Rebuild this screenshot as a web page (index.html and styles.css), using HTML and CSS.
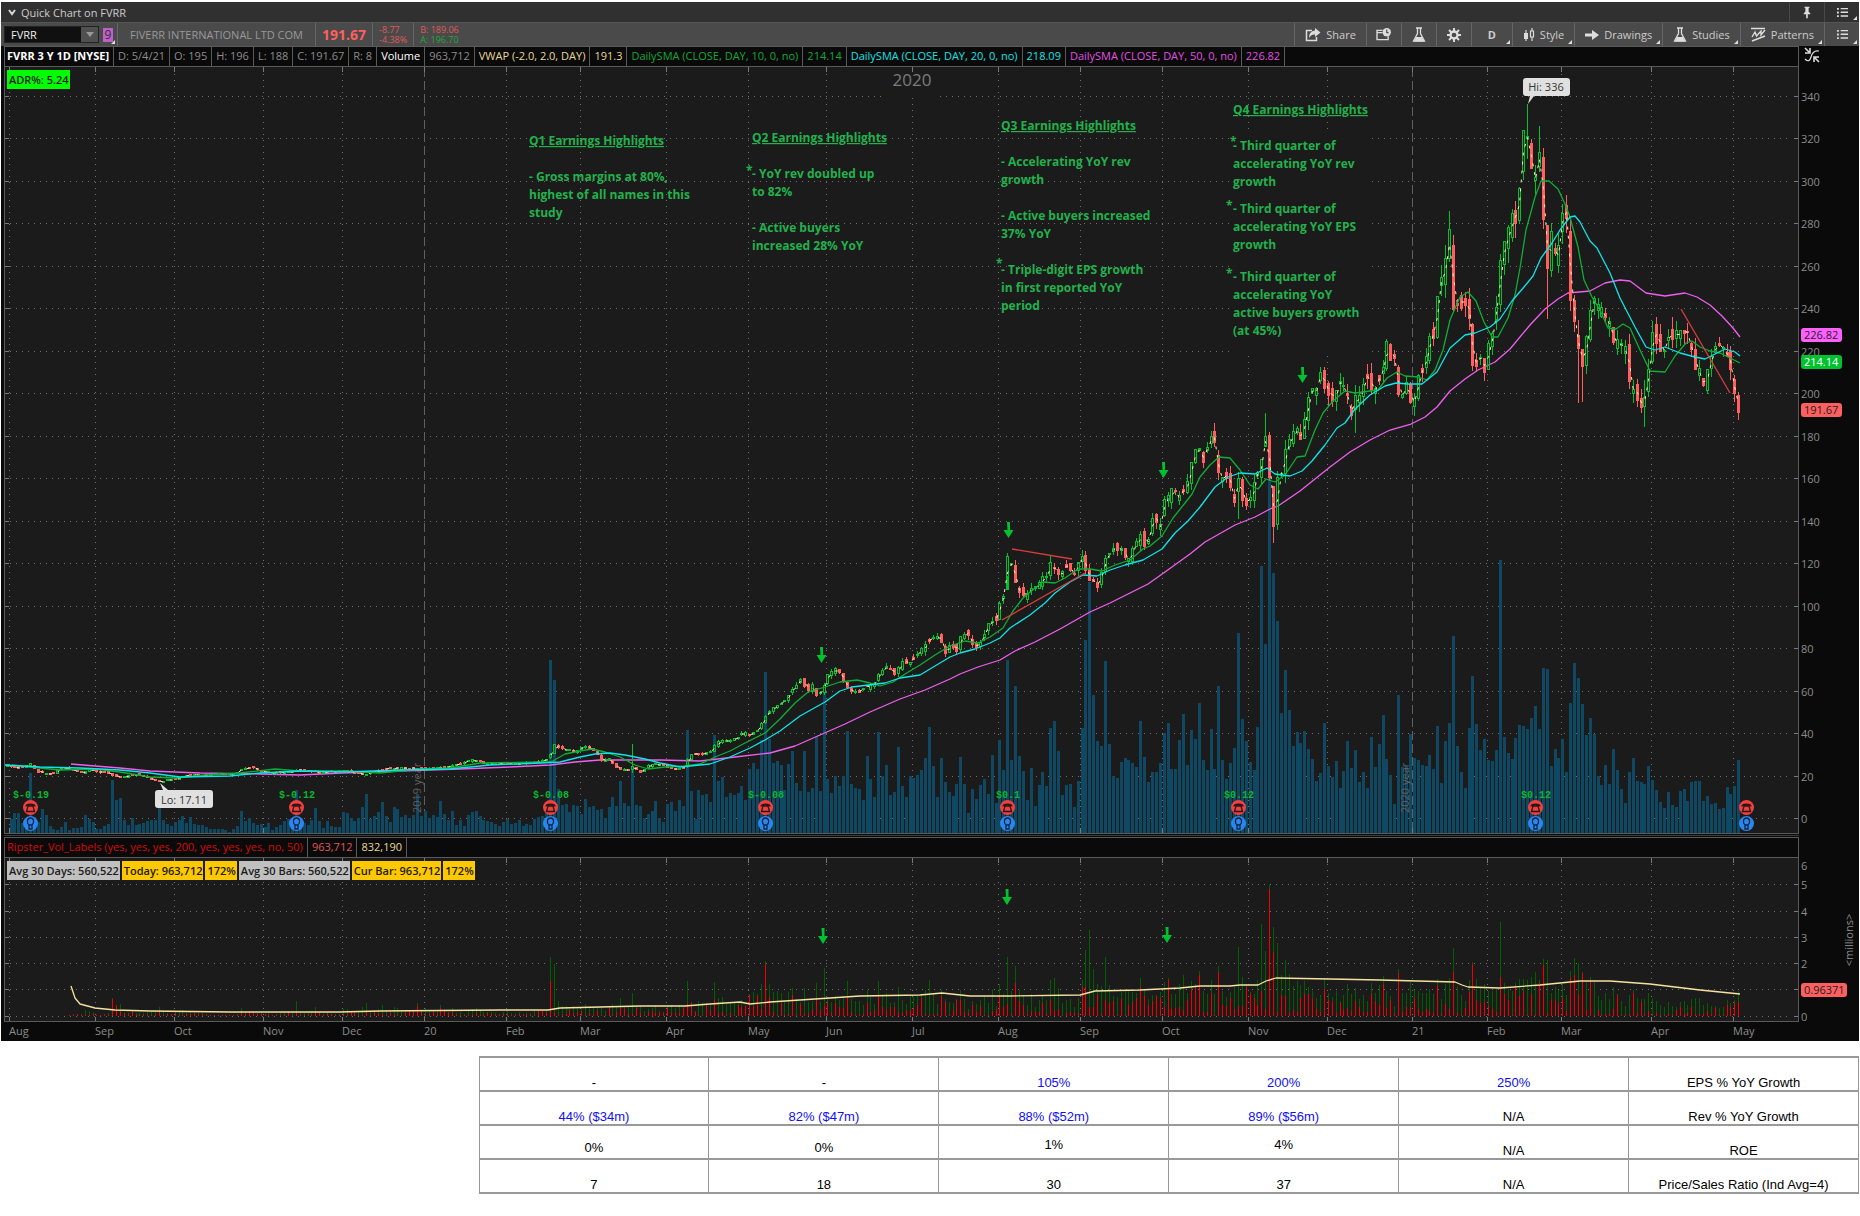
FILE: index.html
```html
<!DOCTYPE html>
<html lang="en">
<head>
    <meta charset="UTF-8">
    <meta name="viewport" content="width=device-width, initial-scale=1.0">
    <title>Quick Chart on FVRR</title>
    <link rel="stylesheet" href="styles.css">
</head>
<body>
    <main class="platform">
        <header class="titlebar">
            <svg class="chevron" viewBox="0 0 8 8"><path d="M1 2l3 4 3-4" fill="none" stroke="#d8d8d8" stroke-width="2"/></svg>
            <h1>Quick Chart on FVRR</h1>
            <button class="tool icon-only pin" aria-label="Pin">
                <svg viewBox="0 0 12 16" width="10" height="13"><path d="M3 1h6v1.5H8V7l2 2v1H7v5H5v-5H2V9l2-2V2.500H3z" fill="#ddd"/></svg>
            </button>
            <button class="tool icon-only menu has-corner" aria-label="Window menu">
                <svg viewBox="0 0 12 12" width="11" height="11"><path d="M0 1h2v2H0zM4 1h8v1.500H4zM0 5h2v2H0zM4 5h8v1.500H4zM0 9h2v2H0zM4 9h8v1.500H4z" fill="#ddd"/></svg>
            </button>
        </header>

        <div class="toolbar">
            <div class="symbol">
                <input type="text" value="FVRR" aria-label="Symbol">
                <button aria-label="Symbol list"><svg viewBox="0 0 8 5" width="8" height="5"><path d="M0 0h8L4 5z" fill="#999"/></svg></button>
            </div>
            <button class="link-badge has-corner" aria-label="Link group"><span>9</span></button>
            <div class="quote company">FIVERR INTERNATIONAL LTD COM</div>
            <div class="quote last">191.67</div>
            <div class="quote pair"><span class="down">-8.77</span><span class="down">-4.38%</span></div>
            <div class="quote pair"><span class="down">B: 189.06</span><span class="up">A: 196.70</span></div>
            <div class="tools">
                <button class="tool share">
                    <svg viewBox="0 0 16 14" width="16" height="14"><path d="M7 2.500H1.500v10h10V9" fill="none" stroke="#ddd" stroke-width="1.500"/><path d="M10 0l5.500 4.500L10 9V6.500C7 6.300 5.500 7.500 4 10c0-4.500 2-7 6-7.500z" fill="#ddd"/></svg>
                    Share
                </button>
                <button class="tool icon-only" aria-label="Report">
                    <svg viewBox="0 0 16 14" width="15" height="13"><path d="M7 2.500H1v10h12V9M1 5h6" fill="none" stroke="#ddd" stroke-width="1.500"/><circle cx="11.500" cy="4.500" r="4.500" fill="#ddd"/><path d="M11.500 1.500v3.500h2" fill="none" stroke="#4a4a4a" stroke-width="1.200"/></svg>
                </button>
                <button class="tool icon-only" aria-label="Lab">
                    <svg viewBox="0 0 14 16" width="14" height="16"><path d="M4 1h6M5.500 1v5.500L1.500 14h11L8.500 6.500V1" fill="none" stroke="#ddd" stroke-width="1.300"/><path d="M4 10h6l2 4.500H2z" fill="#ddd"/></svg>
                </button>
                <button class="tool icon-only" aria-label="Settings">
                    <svg viewBox="0 0 16 16" width="14" height="14"><circle cx="8" cy="8" r="4" fill="none" stroke="#ddd" stroke-width="2.600"/><path d="M8 0v4M8 12v4M0 8h4M12 8h4M2.300 2.300l2.800 2.800M10.900 10.900l2.800 2.800M2.300 13.700l2.800-2.800M10.900 5.100l2.800-2.800" stroke="#ddd" stroke-width="2.200"/></svg>
                </button>
                <button class="tool period has-corner">D</button>
                <button class="tool has-corner">
                    <svg viewBox="0 0 12 14" width="12" height="14"><path d="M3 2v11M9 0v3M9 9v4" stroke="#ddd" stroke-width="1.200"/><path d="M1 5h4v6H1z" fill="#ddd"/><path d="M7.500 3h3v6h-3z" fill="none" stroke="#ddd" stroke-width="1.200"/></svg>
                    Style
                </button>
                <button class="tool has-corner">
                    <svg viewBox="0 0 14 12" width="14" height="12"><path d="M0 4.500h7V1l7 5-7 5V7.500H0z" fill="#ddd"/></svg>
                    Drawings
                </button>
                <button class="tool has-corner">
                    <svg viewBox="0 0 14 16" width="14" height="16"><path d="M4 1h6M5.500 1v5.500L1.500 14h11L8.500 6.500V1" fill="none" stroke="#ddd" stroke-width="1.300"/><path d="M4 10h6l2 4.500H2z" fill="#ddd"/></svg>
                    Studies
                </button>
                <button class="tool has-corner">
                    <svg viewBox="0 0 15 15" width="15" height="15"><path d="M0 1.500h14M1 14l13-5" stroke="#ddd" stroke-width="1.600"/><path d="M1 10l3-5 1.500 4L10 4v4l4-5" fill="none" stroke="#ddd" stroke-width="1.400"/></svg>
                    Patterns
                </button>
                <button class="tool icon-only menu has-corner" aria-label="Chart menu">
                    <svg viewBox="0 0 12 12" width="11" height="11"><path d="M0 1h2v2H0zM4 1h8v1.500H4zM0 5h2v2H0zM4 5h8v1.500H4zM0 9h2v2H0zM4 9h8v1.500H4z" fill="#ddd"/></svg>
                </button>
            </div>
        </div>

        <div class="legend-row">
            <div class="legend">
                <span class="name">FVRR 3 Y 1D [NYSE]</span>
                <span>D: 5/4/21</span>
                <span>O: 195</span>
                <span>H: 196</span>
                <span>L: 188</span>
                <span>C: 191.67</span>
                <span>R: 8</span>
                <span class="white">Volume</span>
                <span>963,712</span>
                <span class="vwap">VWAP (-2.0, 2.0, DAY)</span>
                <span class="vwap">191.3</span>
                <span class="sma10">DailySMA (CLOSE, DAY, 10, 0, no)</span>
                <span class="sma10">214.14</span>
                <span class="sma20">DailySMA (CLOSE, DAY, 20, 0, no)</span>
                <span class="sma20">218.09</span>
                <span class="sma50">DailySMA (CLOSE, DAY, 50, 0, no)</span>
                <span class="sma50">226.82</span>
            </div>
            <button class="collapse" aria-label="Collapse axis">
                <svg viewBox="0 0 16 16" width="16" height="16"><path d="M1 1l4 4M6 1v5H1M15 15l-4-4M10 15v-5h5" fill="none" stroke="#ddd" stroke-width="1.600"/><path d="M1 12c3 3 5 2 6-2s3-7 8-6" fill="none" stroke="#ddd" stroke-width="1.200"/></svg>
            </button>
        </div>

        <section class="panel">
            <svg id="priceChart" class="chart" viewBox="1 67 1858 767"></svg>
            <div class="labels"><span class="adr">ADR%: 5.24</span></div>
        </section>

        <div class="divider"></div>

        <div class="legend-row">
            <div class="legend">
                <span class="ripster">Ripster_Vol_Labels (yes, yes, yes, 200, yes, yes, yes, no, 50)</span>
                <span class="down">963,712</span>
                <span class="vwap">832,190</span>
            </div>
        </div>

        <section class="panel">
            <svg id="volumeChart" class="chart" viewBox="1 858 1858 183"></svg>
            <div class="labels">
                <span>Avg 30 Days: 560,522</span>
                <span class="hot">Today: 963,712</span>
                <span class="hot">172%</span>
                <span>Avg 30 Bars: 560,522</span>
                <span class="hot">Cur Bar: 963,712</span>
                <span class="hot">172%</span>
            </div>
        </section>
    </main>

    <table class="growth">
        <tbody>
            <tr><td>-</td><td>-</td><td class="blue">105%</td><td class="blue">200%</td><td class="blue">250%</td><th scope="row">EPS % YoY Growth</th></tr>
            <tr><td class="blue">44% ($34m)</td><td class="blue">82% ($47m)</td><td class="blue">88% ($52m)</td><td class="blue">89% ($56m)</td><td>N/A</td><th scope="row">Rev % YoY Growth</th></tr>
            <tr><td class="mid">0%</td><td class="mid">0%</td><td class="high">1%</td><td class="high">4%</td><td>N/A</td><th scope="row">ROE</th></tr>
            <tr><td>7</td><td>18</td><td>30</td><td>37</td><td>N/A</td><th scope="row">Price/Sales Ratio (Ind Avg=4)</th></tr>
        </tbody>
    </table>

    <script src="chart.js"></script>
</body>
</html>
```

FILE: styles.css
```css
* {
    box-sizing: border-box;
}

body {
    margin: 0;
    padding: 2px 1px 0;
    background: #fff;
    font-family: "Open Sans", "Noto Sans", sans-serif;
    font-size: 11px;
    color: #ccc;
}

button {
    font: inherit;
    color: inherit;
    background: none;
    border: none;
    padding: 0;
    cursor: pointer;
}

.platform {
    background: #0a0a0a;
}

/* title bar */
.titlebar {
    display: flex;
    align-items: center;
    height: 20px;
    padding-left: 7px;
    background: #303030;
}

.titlebar h1 {
    flex: 1;
    margin: 0 0 0 5px;
    font-size: 11px;
    font-weight: 400;
}

.chevron {
    width: 8px;
    height: 8px;
}

/* toolbar */
.toolbar {
    display: flex;
    align-items: stretch;
    height: 24px;
    border-top: 1px solid #555;
    background: #4a4a4a;
}

.symbol {
    display: flex;
    width: 95px;
    margin: 3px 0 3px 3px;
    border: 1px solid #222;
    background: #101010;
}

.symbol input {
    flex: 1;
    min-width: 0;
    padding: 0 6px;
    border: none;
    background: none;
    font: inherit;
    color: #eee;
}

.symbol button {
    display: flex;
    align-items: center;
    justify-content: center;
    width: 17px;
    background: #505050;
}

.link-badge {
    display: flex;
    align-items: center;
    justify-content: center;
    width: 18px;
}

.link-badge span {
    width: 10px;
    background: #c05fc8;
    color: #333;
    font-size: 12px;
    line-height: 14px;
}

.quote {
    display: flex;
    align-items: center;
    padding: 0 6px;
    border-left: 1px solid #666;
}

.company {
    padding: 0 12px;
    color: #999;
}

.last {
    font-size: 14px;
    font-weight: 700;
    color: #ff5f5f;
}

.pair {
    flex-direction: column;
    align-items: flex-start;
    justify-content: center;
    font-size: 9px;
    line-height: 10px;
}

.pair:last-of-type {
    border-right: 1px solid #666;
}

.down {
    color: #e05858;
}

.up {
    color: #1fa83c;
}

.tools {
    display: flex;
    margin-left: auto;
}

.tool {
    display: flex;
    align-items: center;
    justify-content: center;
    gap: 5px;
    padding: 0 10px;
    border-left: 1px solid #666;
    color: #ccc;
}

.icon-only {
    width: 35px;
    padding: 0;
}

.titlebar .tool {
    align-self: stretch;
    border-color: #484848;
}

.period {
    width: 41px;
    font-weight: 700;
}

.has-corner {
    position: relative;
}

.has-corner::after {
    content: "";
    position: absolute;
    right: 2px;
    bottom: 2px;
    border-left: 4px solid transparent;
    border-bottom: 4px solid #ddd;
}

/* study legends */
.legend-row {
    display: flex;
    height: 21px;
    padding-left: 3px;
}

.legend {
    flex: 1;
    display: flex;
    border: 1px solid #5a5a5a;
    overflow: hidden;
    white-space: nowrap;
}

.legend span {
    padding: 0 4px;
    border-right: 1px solid #5a5a5a;
    line-height: 18px;
    color: #8c8c8c;
}

.legend span:first-child {
    padding-left: 2px;
}

.legend .name {
    color: #fff;
    font-weight: 700;
}

.legend .white {
    color: #fff;
}

.legend .vwap {
    color: #e8d896;
}

.legend .sma10 {
    color: #10a838;
}

.legend .sma20 {
    color: #18e0e4;
}

.legend .sma50 {
    color: #e050e0;
}

.legend .ripster {
    color: #d80808;
}

.legend .down {
    color: #e05858;
}

.collapse {
    width: 60px;
    padding-left: 5px;
    text-align: left;
}

.legend-row:not(:has(.collapse)) {
    padding-right: 60px;
}

.divider {
    height: 3px;
    margin: 0 60px 0 3px;
    border-top: 1px solid #0a0a0a;
    border-bottom: 1px solid #0a0a0a;
    background: #3c3c3c;
}

/* chart panels */
.panel {
    position: relative;
}

.chart {
    display: block;
    width: 100%;
    height: auto;
}

.labels {
    position: absolute;
    top: 3px;
    left: 6px;
    display: flex;
    gap: 2px;
}

.labels span {
    padding: 0 1px 0 2px;
    background: #c0c0c0;
    color: #1b1b1b;
    font-weight: 600;
    line-height: 19px;
}

.labels .hot {
    background: #ffc800;
}

.labels .adr {
    background: #00ff00;
}

.bg { fill: #1b1b1b; }
.frame { stroke: #5a5a5a; fill: none; }
.grid { stroke: #6e6e6e; stroke-dasharray: 1 5; }
.year-line { stroke: #606060; stroke-dasharray: 9 4; }
.tick { stroke: #7a7a7a; }
.frame, .grid, .year-line, .tick, .volume, .vol-up, .vol-down, .candle-up, .candle-down { shape-rendering: crispEdges; }
.volume { fill: #0f4862; }
.vol-up { fill: #006000; }
.vol-down { fill: #f00000; }
.candle-up { fill: none; stroke: #00c22f; }
.candle-down { fill: #ff5f5f; stroke: #ff5f5f; }
.vwap-line { fill: none; stroke: #fff0b0; stroke-dasharray: 3 6; }
.line { fill: none; stroke-width: 1.3; stroke-linejoin: round; }
.line-10 { stroke: #0fae35; }
.line-20 { stroke: #10e4e8; }
.line-50 { stroke: #ee60ee; }
.line-avg { stroke: #f5e2a0; }
.trend { stroke: #dc3c3c; stroke-width: 1.3; }
.arrow { fill: #00c22f; }
.axis { font-size: 11px; fill: #8c8c8c; }
.year { font-size: 17px; fill: #7c7c7c; }
.year-side { font-size: 11px; fill: #606060; }
.bubble { fill: #e0e0e0; }
.bubble-text { font-size: 11px; fill: #333; }
.eps { font: 700 10px "Liberation Mono", monospace; fill: #0ab52f; }
.note { font: 700 12px "Open Sans", sans-serif; fill: #22b14c; }
.note-title { text-decoration: underline; }
.tag-text { font-size: 11px; fill: #222; }
.tag-light { fill: #fff; }

/* growth table */
.growth {
    width: 74.3%;
    margin: 15px 0 0 auto;
    border-collapse: collapse;
    table-layout: fixed;
    font-family: "Liberation Sans", Arial, sans-serif;
    font-size: 13px;
    color: #000;
}

.growth td,
.growth th {
    height: 34px;
    padding: 0;
    border: 1px solid #999;
    border-width: 2px 1px;
    font-weight: 400;
    line-height: 15px;
    text-align: center;
    vertical-align: bottom;
}

.growth .blue {
    color: #1010f0;
}

.growth .mid {
    padding-bottom: 3px;
}

.growth .high {
    padding-bottom: 6px;
}
```

FILE: chart.js
```js
const priceChart = document.getElementById('priceChart');
const volumeChart = document.getElementById('volumeChart');

// Daily volume, as bar heights
const volume = [
    14,20,20,10,11,60,16,11,24,18,7,4,3,6,11,3,5,5,6,18,14,11,4,4,7,9,53,33,35,13,8,15,8,9,10,12,13,13,27,13,
    9,7,11,13,17,10,16,9,8,8,6,4,4,4,4,3,1,4,7,22,12,15,10,8,9,6,10,3,6,8,12,14,13,43,11,10,8,13,25,12,
    5,12,7,6,6,21,20,15,12,15,26,39,14,17,21,31,17,11,26,24,16,18,15,18,39,17,22,15,18,16,32,19,13,22,8,13,7,18,21,22,
    17,13,12,11,9,7,11,14,9,10,13,7,9,8,14,16,17,20,173,153,44,28,29,21,28,27,19,34,26,27,23,24,15,26,36,27,52,30,27,66,
    28,27,15,19,22,32,15,11,29,31,22,33,27,103,42,14,43,38,39,31,98,52,56,36,40,38,40,47,33,64,70,64,93,161,94,70,72,68,43,69,
    82,50,42,82,41,45,96,42,141,54,40,57,47,57,102,49,45,44,33,77,54,36,101,57,68,38,41,86,47,36,57,55,58,63,75,106,67,36,75,51,
    41,37,49,76,49,20,44,34,48,54,39,78,30,93,63,173,73,147,77,62,33,65,27,48,61,47,105,112,82,38,48,49,26,52,105,193,251,138,92,87,
    172,89,57,55,71,75,73,70,66,112,76,51,61,61,70,100,110,64,64,93,119,68,103,94,130,73,63,104,64,147,73,54,70,85,200,114,92,71,63,106,
    267,189,382,260,212,120,163,123,87,101,90,102,84,74,52,60,110,67,56,72,45,62,92,65,83,51,61,45,96,66,89,118,74,58,29,138,66,67,99,75,
    73,68,67,78,64,107,50,92,110,197,87,61,45,105,157,109,83,94,73,72,83,273,96,80,74,95,108,107,104,115,127,104,165,164,67,84,75,94,61,130,
    170,155,129,98,115,99,57,48,68,49,84,63,44,30,61,75,52,51,49,67,53,43,31,25,41,28,26,42,44,32,51,52,52,32,37,29,30,24,25,46,
    39,47,73
];

// Share of a day's volume that was sold, where it stands out
const soldShare = { 26: 0.95, 104: 0.8, 138: 0.6, 139: 0.06, 193: 0.95, 208: 0.2, 255: 0.2, 257: 0.65, 276: 0.1, 309: 0.88, 314: 0.15, 320: 0.27, 321: 0.1, 322: 0.97, 323: 0.72, 324: 0.05, 355: 0.92, 369: 0.65, 374: 0.97, 381: 0.42, 392: 0.9, 393: 0.06, 399: 0.85, 400: 0.7, 401: 0.4, 402: 0.97, 442: 0.55 };

// Closing price path: x, y
const closes = [
    4,765, 12,765, 20,768, 30,762, 36,771, 50,773, 65,767, 80,772, 92,769, 105,772, 120,777, 130,775, 140,774, 150,778, 160,781, 175,778, 190,774,
    205,775, 220,773, 235,773, 243,768, 253,767, 262,771, 280,772, 300,769, 320,772, 340,770, 365,774, 375,770, 400,767, 420,769, 440,767, 455,764,
    473,759, 485,763, 500,763, 520,763, 540,761, 548,758, 550,753, 554,744, 560,748, 578,750, 583,746, 596,752, 600,760, 610,758, 613,765, 622,769,
    627,771, 632,765, 640,772, 648,765, 656,763, 670,767, 680,769, 684,766, 688,755, 700,754, 712,750, 716,741, 730,740, 740,735, 743,730, 749,736,
    757,730, 762,722, 766,715, 775,705, 785,700, 792,690, 800,680, 806,690, 812,685, 817,697, 822,688, 828,672, 835,668, 840,675, 848,690, 860,691,
    868,684, 873,684, 878,676, 886,665, 894,675, 900,662, 908,664, 916,655, 924,645, 932,637, 938,636, 944,652, 950,645, 957,650, 961,632, 968,636,
    975,648, 982,638, 987,625, 997,618, 1000,602, 1004,597, 1007,555, 1011,564, 1016,585, 1019,593, 1023,596, 1028,593, 1032,585, 1035,589, 1040,580,
    1043,572, 1047,576, 1051,560, 1055,568, 1059,578, 1065,567, 1070,570, 1075,575, 1078,563, 1082,553, 1086,570, 1089,578, 1092,575, 1096,585,
    1098,590, 1102,568, 1105,555, 1110,554, 1114,547, 1120,548, 1126,560, 1130,556, 1134,545, 1138,537, 1142,533, 1145,551, 1149,531, 1153,516,
    1157,521, 1160,523, 1163,500, 1167,495, 1171,487, 1176,490, 1180,494, 1184,488, 1188,475, 1192,455, 1196,443, 1200,450, 1203,460, 1206,448,
    1211,436, 1215,440, 1219,478, 1223,480, 1227,478, 1230,485, 1234,500, 1238,475, 1242,500, 1246,505, 1250,496, 1254,482, 1258,473, 1262,455,
    1265,435, 1267,440, 1270,490, 1273,528, 1277,480, 1281,470, 1285,452, 1289,441, 1293,432, 1297,432, 1301,436, 1305,413, 1309,395, 1316,387,
    1320,372, 1323,382, 1327,398, 1332,397, 1336,388, 1340,377, 1344,390, 1348,398, 1351,413, 1356,395, 1360,390, 1367,380, 1372,390, 1378,385,
    1383,363, 1387,343, 1391,360, 1395,360, 1399,400, 1403,395, 1407,383, 1411,407, 1415,398, 1418,370, 1422,375, 1426,357, 1430,337, 1434,340,
    1438,283, 1442,280, 1446,257, 1450,215, 1453,308, 1457,307, 1461,310, 1464,300, 1468,315, 1472,360, 1477,370, 1481,357, 1485,372, 1489,340,
    1493,327, 1497,300, 1500,260, 1504,237, 1508,220, 1512,210, 1516,218, 1520,177, 1524,112, 1527,138, 1531,167, 1535,178, 1539,153, 1543,227,
    1547,267, 1550,230, 1555,257, 1559,243, 1563,203, 1567,223, 1570,300, 1575,330, 1579,353, 1583,370, 1586,337, 1590,307, 1594,297, 1598,303,
    1602,303, 1605,313, 1609,323, 1614,350, 1618,337, 1622,340, 1626,343, 1629,387, 1634,393, 1638,400, 1642,407, 1645,393, 1649,363, 1653,330,
    1657,347, 1661,357, 1665,347, 1669,333, 1673,337, 1677,330, 1681,323, 1685,340, 1689,333, 1693,353, 1696,370, 1700,373, 1704,383, 1708,360,
    1712,353, 1716,347, 1720,337, 1724,352, 1728,360, 1732,377, 1735,395, 1739,412
];

// Days with long wicks: high y, low y
const extremes = { 159: [744, 773], 255: [553, 576], 314: [472, 519], 321: [413, 445], 323: [488, 543], 344: [385, 433], 368: [211, 262], 388: [104, 159], 391: [126, 172], 393: [225, 319], 401: [320, 403], 402: [350, 402], 418: [380, 427], 431: [338, 368] };

const sma10 = [
    12,765, 40,768, 60,770, 95,769, 120,772, 150,777, 175,778, 205,775, 240,773, 275,769, 300,771, 345,771, 380,773, 420,769, 450,768, 480,763,
    540,762, 551,762, 565,754, 580,751, 592,749, 605,752, 620,757, 635,765, 648,769, 665,767, 685,766, 700,764, 715,757, 730,751, 745,743, 765,733,
    780,719, 795,703, 808,692, 825,687, 840,682, 857,680, 870,683, 880,686, 893,682, 905,674, 920,665, 935,655, 950,646, 965,641, 978,643, 990,637,
    1003,628, 1013,611, 1023,598, 1035,588, 1043,582, 1055,583, 1065,578, 1078,569, 1090,569, 1102,571, 1115,565, 1130,560, 1143,549, 1150,546,
    1162,536, 1173,518, 1185,503, 1192,494, 1200,477, 1210,465, 1219,457, 1230,458, 1240,470, 1250,485, 1258,489, 1266,479, 1275,482, 1285,475,
    1297,457, 1305,456, 1315,430, 1323,413, 1333,401, 1345,391, 1355,393, 1378,390, 1387,378, 1397,372, 1405,376, 1418,377, 1427,380, 1435,370,
    1443,350, 1450,320, 1460,297, 1468,292, 1476,301, 1484,322, 1492,337, 1498,337, 1508,318, 1515,295, 1520,268, 1526,230, 1535,197, 1541,181,
    1549,181, 1558,189, 1565,204, 1570,217, 1578,247, 1584,280, 1592,297, 1600,310, 1608,328, 1616,329, 1623,324, 1630,328, 1640,350, 1650,371,
    1665,372, 1675,356, 1686,343, 1692,341, 1700,347, 1710,351, 1720,353, 1730,358, 1740,363
];

const sma20 = [
    4,765, 40,767, 80,768, 120,770, 150,773, 180,777, 230,776, 260,773, 300,771, 345,772, 400,770, 450,769, 490,765, 540,763, 560,762, 580,757,
    595,754, 610,753, 625,755, 645,759, 660,763, 680,767, 710,764, 730,757, 750,748, 765,740, 780,731, 800,716, 825,702, 840,691, 852,687, 885,683,
    900,678, 920,675, 935,666, 950,657, 960,653, 975,649, 990,643, 1000,638, 1010,628, 1030,615, 1045,603, 1055,593, 1070,582, 1083,575, 1097,576,
    1110,570, 1125,565, 1143,560, 1162,549, 1175,533, 1188,521, 1200,507, 1215,487, 1228,477, 1240,473, 1255,474, 1267,468, 1275,474, 1290,476,
    1302,471, 1312,461, 1325,445, 1337,428, 1345,423, 1355,409, 1370,395, 1385,386, 1396,383, 1408,384, 1422,384, 1437,372, 1450,348, 1465,335,
    1475,333, 1490,327, 1500,319, 1512,301, 1524,287, 1533,276, 1541,258, 1552,243, 1560,230, 1570,217, 1575,216, 1580,222, 1590,241, 1597,248,
    1610,273, 1620,298, 1635,327, 1646,347, 1655,350, 1665,347, 1680,353, 1695,357, 1705,359, 1715,354, 1725,349, 1735,352, 1740,356
];

const sma50 = [
    71,764, 95,766, 120,768, 150,771, 200,773, 260,774, 300,775, 342,773, 400,771, 460,769, 510,767, 550,765, 575,762, 600,760, 625,760, 660,760,
    700,761, 735,757, 770,753, 795,746, 820,735, 845,724, 870,712, 900,699, 925,690, 950,679, 960,674, 978,667, 1000,660, 1015,651, 1035,642,
    1060,629, 1090,612, 1110,603, 1130,593, 1148,584, 1165,572, 1190,554, 1205,542, 1235,525, 1255,517, 1270,509, 1278,506, 1300,491, 1310,483,
    1330,467, 1350,452, 1370,440, 1390,430, 1411,424, 1425,417, 1437,407, 1450,391, 1465,379, 1478,370, 1495,362, 1510,349, 1530,325, 1545,309,
    1558,299, 1568,293, 1590,291, 1605,283, 1620,280, 1630,281, 1646,293, 1665,296, 1685,293, 1697,297, 1710,305, 1722,316, 1733,328, 1740,337
];

const volumeAverage = [
    71,986, 75,998, 80,1004, 95,1008, 115,1010, 150,1011, 230,1012, 340,1012, 380,1011, 500,1010, 548,1010, 560,1008, 600,1007, 640,1006, 685,1006,
    710,1004, 740,1002, 750,1004, 770,1002, 800,1000, 830,998, 860,996, 920,995, 942,993, 970,996, 1010,996, 1080,995, 1095,991, 1140,990, 1160,989,
    1180,988, 1200,986, 1230,986, 1240,985, 1258,985, 1266,981, 1276,978, 1330,979, 1380,980, 1455,982, 1462,985, 1468,987, 1500,988, 1540,985,
    1580,981, 1610,981, 1650,984, 1700,990, 1740,994
];

const months = [
    [9, 'Aug'], [95, 'Sep'], [174, 'Oct'], [263, 'Nov'], [342, 'Dec'], [424, '20'], [506, 'Feb'], [580, 'Mar'], [666, 'Apr'], [748, 'May'], [826, 'Jun'],
    [912, 'Jul'], [998, 'Aug'], [1080, 'Sep'], [1162, 'Oct'], [1248, 'Nov'], [1327, 'Dec'], [1412, '21'], [1487, 'Feb'], [1561, 'Mar'], [1651, 'Apr'], [1733, 'May']
];

const earnings = [[30, '$-0.19'], [296, '$-0.12'], [550, '$-0.08'], [765, '$-0.08'], [1007, '$0.1'], [1238, '$0.12'], [1535, '$0.12'], [1746, '']];

// x, baseline of the first line, lines
const notes = [
    [529, 145, ['Q1 Earnings Highlights', '', '- Gross margins at 80%,', 'highest of all names in this', 'study']],
    [752, 142, ['Q2 Earnings Highlights', '', '- YoY rev doubled up', 'to 82%', '', '- Active buyers', 'increased 28% YoY']],
    [1001, 130, ['Q3 Earnings Highlights', '', '- Accelerating YoY rev', 'growth', '', '- Active buyers increased', '37% YoY', '', '- Triple-digit EPS growth', 'in first reported YoY', 'period']],
    [1233, 114, ['Q4 Earnings Highlights', '', '- Third quarter of', 'accelerating YoY rev', 'growth']],
    [1233, 213, ['- Third quarter of', 'accelerating YoY EPS', 'growth']],
    [1233, 281, ['- Third quarter of', 'accelerating YoY', 'active buyers growth', '(at 45%)']]
];
const stars = [[746, 175], [996, 268], [1230, 146], [1226, 210], [1226, 278]];

function add(parent, name, attrs, text) {
    const el = document.createElementNS('http://www.w3.org/2000/svg', name);
    for (const key in attrs) el.setAttribute(key, attrs[key]);
    if (text !== undefined) el.textContent = text;
    parent.appendChild(el);
    return el;
}

function line(parent, cls, x1, y1, x2, y2) {
    add(parent, 'line', { class: cls, x1, y1, x2, y2 });
}

function polyline(parent, cls, points) {
    add(parent, 'polyline', { class: 'line ' + cls, points: points.join(' ') });
}

function arrow(parent, x, y) {
    add(parent, 'path', { class: 'arrow', d: `M${x - 1.5} ${y}h3v8h3.5l-5 8-5-8h4z` });
}

// Repeatable noise between 0 and 1
let seed = 7;
function noise() {
    seed = (seed * 16807) % 2147483647;
    return seed / 2147483647;
}

function closeAt(x) {
    for (let i = 2; i < closes.length; i += 2) {
        if (x <= closes[i]) {
            const t = (x - closes[i - 2]) / (closes[i] - closes[i - 2]);
            return closes[i - 1] + t * (closes[i + 1] - closes[i - 1]);
        }
    }
    return closes[closes.length - 1];
}

const dayX = i => 10.5 + 3.909 * i;
const priceY = price => 818.5 - 2.1245 * price;
const millionsY = m => 1016.5 - 26.25 * m;

function tag(parent, y, color, text, width, light) {
    add(parent, 'rect', { x: 1801, y: y - 7, width, height: 14, rx: 3, fill: color });
    add(parent, 'text', { class: light ? 'tag-text tag-light' : 'tag-text', x: 1804, y: y + 4 }, text);
}

function drawPriceGrid() {
    const c = priceChart;
    add(c, 'rect', { class: 'bg', x: 4, y: 67, width: 1795, height: 766 });
    for (let p = 0; p <= 340; p += 20) {
        const y = Math.floor(priceY(p)) + 0.5;
        line(c, 'grid', 10, y, 1790, y);
        line(c, 'tick', 4, y, 9, y);
        line(c, 'tick', 1794, y, 1798, y);
        add(c, 'text', { class: 'axis', x: 1801, y: y + 4 }, p);
    }
    months.forEach(([x, name]) => {
        const isYear = name === '20' || name === '21';
        line(c, isYear ? 'year-line' : 'grid', x + 0.5, 68, x + 0.5, 832);
        line(c, 'tick', x + 0.5, 67, x + 0.5, 72);
        line(c, 'tick', x + 0.5, 828, x + 0.5, 833);
    });
    add(c, 'rect', { class: 'bg', x: 886, y: 74, width: 52, height: 24 });
    add(c, 'text', { class: 'year', x: 912, y: 86, 'text-anchor': 'middle' }, '2020');
}

function drawPrices() {
    const c = priceChart;
    volume.forEach((v, i) => add(c, 'rect', { class: 'volume', x: Math.round(dayX(i)) - 1, y: 833 - v, width: 3, height: v }));

    add(c, 'text', { class: 'year-side', x: 0, y: 0, transform: 'translate(421 813) rotate(-90)' }, '2019 year');
    add(c, 'text', { class: 'year-side', x: 0, y: 0, transform: 'translate(1409 813) rotate(-90)' }, '2020 year');

    polyline(c, 'line-50', sma50);

    let previous = 765;
    const mids = [];
    for (let i = -1; i < volume.length; i++) {
        const x = Math.round(dayX(i)) + 0.5;
        const height = 818.5 - closeAt(dayX(i));
        const close = closeAt(dayX(i)) + (noise() - 0.5) * height * 0.02;
        const open = close + (previous - close) * 0.8 + (noise() - 0.5) * height * 0.05;
        const top = Math.round(Math.min(open, close)) + 0.5;
        const bottom = Math.max(top + 1, Math.round(Math.max(open, close)) + 0.5);
        let high = top - noise() * height * 0.025;
        let low = bottom + noise() * height * 0.025;
        if (extremes[i]) [high, low] = extremes[i];
        const cls = close <= open ? 'candle-up' : 'candle-down';
        add(c, 'path', { class: cls, d: `M${x} ${Math.round(high)}V${top}M${x} ${bottom}V${Math.round(low)}M${x - 1} ${top}h2V${bottom}h-2z` });
        mids.push(x, (top + bottom) / 2);
        previous = close;
    }
    add(c, 'polyline', { class: 'vwap-line', points: mids.join(' ') });

    polyline(c, 'line-10', sma10);
    polyline(c, 'line-20', sma20);
    line(c, 'trend', 1012, 549, 1072, 559);
    line(c, 'trend', 1002, 620, 1085, 573);
    line(c, 'trend', 1681, 309, 1730, 393);
}

function drawMarks() {
    const c = priceChart;
    earnings.forEach(([x, eps]) => {
        add(c, 'text', { class: 'eps', x: x + 1, y: 798, 'text-anchor': 'middle' }, eps);
        add(c, 'circle', { cx: x + 0.5, cy: 807.5, r: 7.5, fill: '#f04040' });
        add(c, 'path', { d: `M${x - 4} 806.500c0-3 9-3 9 0M${x - 2} 806l-1.500 5.500h8L${x + 3} 806z`, fill: 'none', stroke: '#2a1515', 'stroke-width': 1.3 });
        add(c, 'circle', { cx: x + 0.5, cy: 823.5, r: 7.5, fill: '#2a86f0' });
        add(c, 'path', { d: `M${x - 1} 825c-3-3-1.500-7 1.500-7s4.500 4 1.500 7zM${x - 1} 825v4h3v-4`, fill: 'none', stroke: '#10253c', 'stroke-width': 1.3 });
    });
    [[821, 647], [1008, 522], [1163, 462], [1302, 367]].forEach(([x, y]) => arrow(c, x + 0.5, y));

    // keeps the grid from running through the Q4 notes
    add(c, 'rect', { class: 'bg', x: 1229, y: 133, width: 142, height: 220 });
    notes.forEach(([x, y, lines]) => {
        lines.forEach((text, n) => {
            if (text) add(c, 'text', { class: text[0] === 'Q' ? 'note note-title' : 'note', x, y: y + n * 18 }, text);
        });
    });
    stars.forEach(([x, y]) => add(c, 'text', { class: 'note', x, y }, '*'));

    add(c, 'path', { class: 'bubble', d: 'M1526 78h41q3 0 3 3v12q0 3-3 3h-33l-6 8 2-8h-4q-3 0-3-3v-12q0-3 3-3z' });
    add(c, 'text', { class: 'bubble-text', x: 1546, y: 91, 'text-anchor': 'middle' }, 'Hi: 336');
    add(c, 'path', { class: 'bubble', d: 'M158 790h5l-3-7 8 7h42q3 0 3 3v12q0 3-3 3h-52q-3 0-3-3v-12q0-3 3-3z' });
    add(c, 'text', { class: 'bubble-text', x: 184, y: 804, 'text-anchor': 'middle' }, 'Lo: 17.11');

    add(c, 'path', { class: 'frame', d: 'M4.5 67V833.5H1798.5V67' });
    tag(c, 335, '#ff5fff', '226.82', 41);
    tag(c, 362, '#00c22f', '214.14', 41, true);
    tag(c, 410, '#ff5f5f', '191.67', 41);
}

function drawVolume() {
    const c = volumeChart;
    add(c, 'rect', { class: 'bg', x: 4, y: 858, width: 1795, height: 163 });
    for (let m = 0; m <= 6; m++) {
        const y = Math.round(millionsY(m)) - 0.5;
        if (m < 6) {
            line(c, 'grid', 10, y, 1790, y);
            line(c, 'tick', 4, y, 9, y);
            line(c, 'tick', 1794, y, 1798, y);
        }
        if (m !== 1) add(c, 'text', { class: 'axis', x: 1801, y: m < 6 ? y + 4 : 870 }, m);
    }
    months.forEach(([x, name]) => {
        line(c, 'grid', x + 0.5, 858, x + 0.5, 1021);
        line(c, 'tick', x + 0.5, 858, x + 0.5, 863);
        line(c, 'tick', x + 0.5, 1017, x + 0.5, 1021);
        add(c, 'text', { class: 'axis', x, y: 1035 }, name);
    });
    volume.forEach((v, i) => {
        if (i < 15) return;
        const total = Math.round(v * 0.343);
        const share = soldShare[i] || (noise() < 0.45 ? noise() * 0.3 : 0.3 + noise() * 0.65);
        const sold = Math.max(1, Math.round(total * share));
        const x = Math.round(dayX(i));
        add(c, 'rect', { class: 'vol-up', x, y: 1016 - total, width: 1, height: total });
        add(c, 'rect', { class: 'vol-down', x, y: 1016 - sold, width: 1, height: sold });
    });
    polyline(c, 'line-avg', volumeAverage);
    [[823, 928], [1007, 889], [1167, 927]].forEach(([x, y]) => arrow(c, x, y));
    add(c, 'path', { class: 'frame', d: 'M4.5 858V1021.5H1798.5V858' });
    add(c, 'text', { class: 'axis', x: 0, y: 0, 'text-anchor': 'middle', transform: 'translate(1853 940) rotate(-90)' }, '<millions>');
    tag(c, 990, '#ff5f5f', '0.96371', 46);
}

drawPriceGrid();
drawPrices();
drawMarks();
drawVolume();
```
